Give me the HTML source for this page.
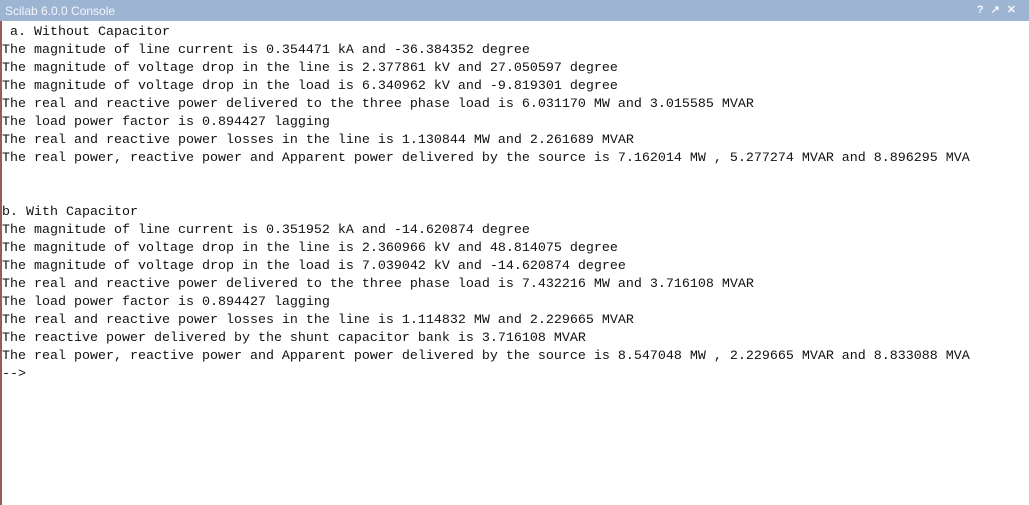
<!DOCTYPE html>
<html><head><meta charset="utf-8"><style>
html,body{margin:0;padding:0;width:1029px;height:505px;overflow:hidden;background:#fff;}
.title{position:absolute;left:0;top:0;width:1029px;height:21px;background:#9db5d3;color:#f4f6fa;font:12px "Liberation Sans",sans-serif;line-height:22px;}
.title span{position:absolute;left:5px;top:0;}
.icons{position:absolute;right:6px;top:3px;font:bold 11px "Liberation Sans",sans-serif;letter-spacing:7px;}
.lb{position:absolute;left:0;top:21px;width:2px;height:484px;background:#9a5a55;}
pre{position:absolute;left:2px;top:24px;margin:0;font-family:"Liberation Mono",monospace;font-size:13.33px;line-height:18px;color:#111;}
</style></head><body>
<div class="title"><span>Scilab 6.0.0 Console</span><div class="icons">?↗✕</div></div>
<div class="lb"></div>
<pre> a. Without Capacitor
The magnitude of line current is 0.354471 kA and -36.384352 degree
The magnitude of voltage drop in the line is 2.377861 kV and 27.050597 degree
The magnitude of voltage drop in the load is 6.340962 kV and -9.819301 degree
The real and reactive power delivered to the three phase load is 6.031170 MW and 3.015585 MVAR
The load power factor is 0.894427 lagging
The real and reactive power losses in the line is 1.130844 MW and 2.261689 MVAR
The real power, reactive power and Apparent power delivered by the source is 7.162014 MW , 5.277274 MVAR and 8.896295 MVA


b. With Capacitor
The magnitude of line current is 0.351952 kA and -14.620874 degree
The magnitude of voltage drop in the line is 2.360966 kV and 48.814075 degree
The magnitude of voltage drop in the load is 7.039042 kV and -14.620874 degree
The real and reactive power delivered to the three phase load is 7.432216 MW and 3.716108 MVAR
The load power factor is 0.894427 lagging
The real and reactive power losses in the line is 1.114832 MW and 2.229665 MVAR
The reactive power delivered by the shunt capacitor bank is 3.716108 MVAR
The real power, reactive power and Apparent power delivered by the source is 8.547048 MW , 2.229665 MVAR and 8.833088 MVA
--&gt;</pre>
</body></html>
